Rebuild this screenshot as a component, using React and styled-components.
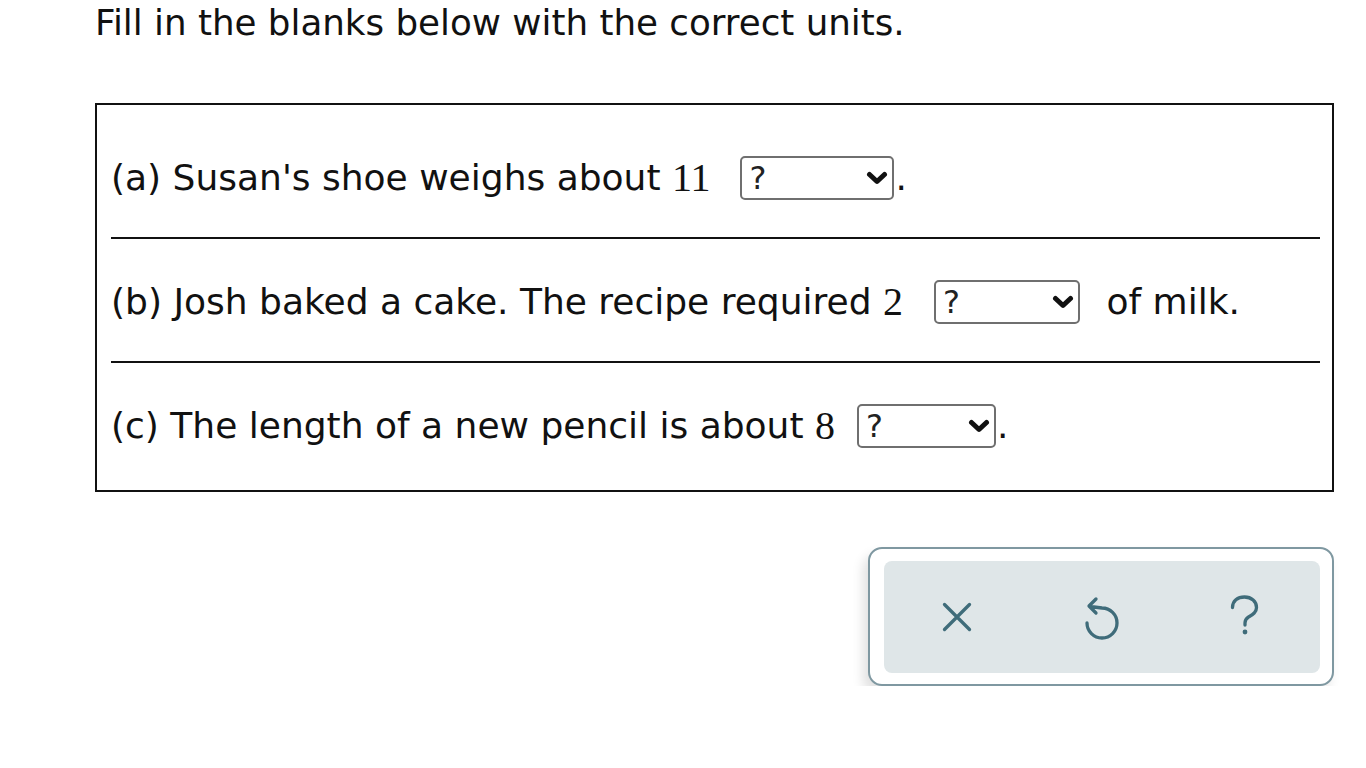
import React from "react";
import styled, { createGlobalStyle } from "styled-components";

const GlobalStyle = createGlobalStyle`
  body {
    margin: 0;
    background: #fff;
    font-family: "DejaVu Sans", Verdana, sans-serif;
    color: #111;
  }
`;

const PageUI = styled.div`
  width: 1239px;
  padding: 2px 0 0 95px;
`;

const PromptUI = styled.div`
  font-size: 35.7px;
  line-height: 42px;
  margin-bottom: 59px;
`;

const BoxUI = styled.div`
  border: 2px solid #111;
  padding: 10px 12px 5px 14px;
`;

const RowUI = styled.div`
  height: 119px;
  padding-top: 3px;
  display: flex;
  align-items: center;
  font-size: 36px;
  white-space: pre;
  border-bottom: ${(p) => (p.last ? "none" : "2px solid #111")};
`;

const NumUI = styled.span`
  font-family: "Liberation Serif", "Times New Roman", serif;
  font-size: 40px;
`;

const SelectUI = styled.span`
  box-sizing: border-box;
  display: inline-flex;
  align-items: center;
  justify-content: space-between;
  width: ${(p) => p.w}px;
  height: 44px;
  margin: 0 1px 0 ${(p) => p.gap}px;
  padding: 0 4px 0 7px;
  border: 2px solid #6f6f6f;
  border-radius: 5px;
  font-size: 32px;
  color: #222;
`;

const TailUI = styled.span`
  margin-left: ${(p) => p.gap || 0}px;
`;

const PanelUI = styled.div`
  box-sizing: border-box;
  width: 466px;
  height: 139px;
  margin: 55px 0 0 auto;
  padding: 12px 12px 11px 14px;
  border: 2px solid #7f98a1;
  border-radius: 14px;
  background: #fff;
  box-shadow: -5px 8px 12px rgba(0, 0, 0, 0.12);
`;

const ToolbarUI = styled.div`
  height: 100%;
  display: grid;
  grid-template-columns: 1fr 1fr 1fr;
  align-items: center;
  justify-items: center;
  background: #dfe6e8;
  border-radius: 8px;
`;

const ToolUI = styled.button`
  border: none;
  background: none;
  padding: 0;
  display: flex;
  cursor: pointer;
`;

const ICON = "#3f6c7a";

const Chevron = () => (
  <svg width="22" height="14" viewBox="0 0 22 14">
    <polyline
      points="3.5,3.5 11,10.5 18.5,3.5"
      fill="none"
      stroke="#111"
      strokeWidth="5"
      strokeLinecap="round"
      strokeLinejoin="round"
    />
  </svg>
);

const Select = ({ w, gap }) => (
  <SelectUI w={w} gap={gap}>
    ?<Chevron />
  </SelectUI>
);

const CloseIcon = () => (
  <svg width="40" height="40" viewBox="0 0 40 40">
    <path d="M7.5 7.5 L32.5 32.5 M32.5 7.5 L7.5 32.5" stroke={ICON} strokeWidth="3.3" strokeLinecap="round" />
  </svg>
);

const UndoIcon = () => (
  <svg width="55" height="55" viewBox="0 0 55 55">
    <path
      d="M13 33 A15 15 0 1 0 28 18 L16 16.5 M22 9 L15 16 L22 23"
      fill="none"
      stroke={ICON}
      strokeWidth="3.3"
      strokeLinecap="round"
      strokeLinejoin="round"
    />
  </svg>
);

const HelpIcon = () => (
  <svg width="55" height="55" viewBox="0 0 55 55">
    <path
      d="M12.5 17.5 C12.5 11 17.5 7 24.5 7 C31.5 7 36.5 11.5 36.5 17.5 C36.5 23 32 25 28.5 27 C26 28.5 25 30 25 33 V35"
      fill="none"
      stroke={ICON}
      strokeWidth="3.3"
      strokeLinecap="round"
      strokeLinejoin="round"
    />
    <circle cx="25" cy="42" r="2.4" fill={ICON} />
  </svg>
);

export default function App() {
  return (
    <PageUI>
      <GlobalStyle />
      <PromptUI>Fill in the blanks below with the correct units.</PromptUI>
      <BoxUI>
        <RowUI>
          (a) Susan's shoe weighs about <NumUI>11</NumUI>
          <Select w={154} gap={30} />
          <TailUI>.</TailUI>
        </RowUI>
        <RowUI>
          (b) Josh baked a cake. The recipe required <NumUI>2</NumUI>
          <Select w={146} gap={31} />
          <TailUI gap={14}> of milk.</TailUI>
        </RowUI>
        <RowUI last>
          (c) The length of a new pencil is about <NumUI>8</NumUI>
          <Select w={139} gap={22} />
          <TailUI>.</TailUI>
        </RowUI>
      </BoxUI>
      <PanelUI>
        <ToolbarUI>
          <ToolUI aria-label="Clear">
            <CloseIcon />
          </ToolUI>
          <ToolUI aria-label="Undo">
            <UndoIcon />
          </ToolUI>
          <ToolUI aria-label="Help">
            <HelpIcon />
          </ToolUI>
        </ToolbarUI>
      </PanelUI>
    </PageUI>
  );
}
